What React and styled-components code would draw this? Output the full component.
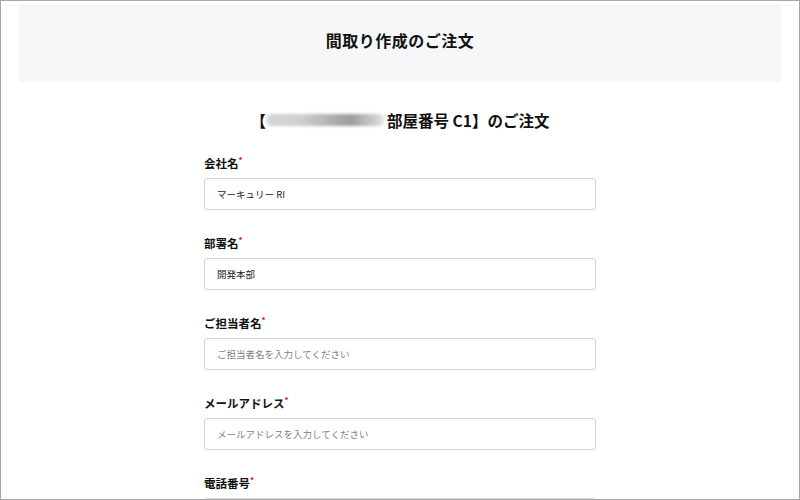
import React from "react";
import styled, { createGlobalStyle } from "styled-components";

const GlobalStyle = createGlobalStyle`
  html, body {
    margin: 0;
    padding: 0;
    background: #fff;
  }
  body {
    font-family: "Noto Sans CJK JP", "Noto Sans", sans-serif;
    color: #1a1a1a;
  }
`;

const Frame = styled.div`
  box-sizing: border-box;
  width: 800px;
  height: 500px;
  border: 1px solid #a9a9a9;
  padding: 4px 5px 0;
  overflow: hidden;
`;

const Sheet = styled.div`
  box-sizing: border-box;
  height: 100%;
  border: 1px solid #f2f2f2;
  border-bottom: none;
  padding: 0 12px;
`;

const Header = styled.header`
  box-sizing: border-box;
  height: 76px;
  padding-bottom: 8px;
  background: #f6f7f9;
  display: flex;
  align-items: center;
  justify-content: center;
`;

const Title = styled.h1`
  margin: 0;
  font-size: 16px;
  font-weight: 700;
  letter-spacing: 0.5px;
  color: #111;
`;

const SubTitle = styled.h2`
  margin: 26px 0 0;
  font-size: 15.5px;
  line-height: 24px;
  font-weight: 700;
  text-align: center;
  color: #111;
  display: flex;
  align-items: center;
  justify-content: center;
`;

const Blurred = styled.span`
  display: inline-block;
  width: 118px;
  height: 12px;
  margin: 0 3px 0 0;
  border-radius: 6px;
  background: linear-gradient(
    90deg,
    #d6d6d6 0%,
    #cfcfcf 30%,
    #a9a9a9 60%,
    #9c9c9c 72%,
    #cdcdcd 92%,
    #e2e2e2 100%
  );
  filter: blur(1.6px);
`;

const Form = styled.form`
  width: 392px;
  margin: 23px auto 0;
  display: flex;
  flex-direction: column;
  gap: 25px;
`;

const Field = styled.div`
  display: flex;
  flex-direction: column;
  gap: 7px;
`;

const Label = styled.label`
  font-size: 11.5px;
  line-height: 16px;
  font-weight: 700;
  color: #111;
`;

const Required = styled.span`
  color: #e60012;
  font-size: 8px;
  vertical-align: top;
  line-height: 10px;
`;

const Input = styled.input`
  box-sizing: border-box;
  width: 100%;
  height: 32px;
  border: 1px solid #d3d3d3;
  border-radius: 3px;
  padding: 0 12px;
  font-family: "Noto Sans CJK JP", "Noto Sans", sans-serif;
  font-size: 9.5px;
  color: #222;
  background: #fff;
  outline: none;
  &::placeholder {
    color: #7f7f7f;
  }
`;

const fields = [
  { label: "会社名", value: "マーキュリー RI" },
  { label: "部署名", value: "開発本部" },
  { label: "ご担当者名", placeholder: "ご担当者名を入力してください" },
  { label: "メールアドレス", placeholder: "メールアドレスを入力してください" },
  { label: "電話番号", placeholder: "電話番号を入力してください" },
];

export default function App() {
  return (
    <>
      <GlobalStyle />
      <Frame>
        <Sheet>
          <Header>
            <Title>間取り作成のご注文</Title>
          </Header>
          <SubTitle>
            【<Blurred />部屋番号 C1】のご注文
          </SubTitle>
          <Form onSubmit={(e) => e.preventDefault()}>
            {fields.map((f) => (
              <Field key={f.label}>
                <Label>
                  {f.label}
                  <Required>*</Required>
                </Label>
                <Input
                  defaultValue={f.value}
                  placeholder={f.placeholder}
                  readOnly
                />
              </Field>
            ))}
          </Form>
        </Sheet>
      </Frame>
    </>
  );
}
